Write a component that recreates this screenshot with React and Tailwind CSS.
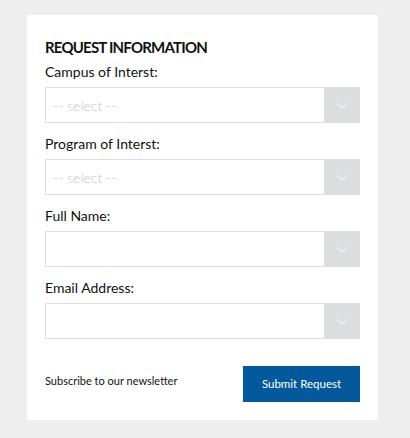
import React from "react";

const Chevron = () => (
  <svg width="12" height="7" viewBox="0 0 12 7" fill="none">
    <path d="M1 1 L6 6 L11 1" stroke="#ffffff" strokeWidth="1" />
  </svg>
);

function Field({ label, placeholder }) {
  return (
    <div className="flex flex-col">
      <div className="h-[36px] pt-[12px] text-[14px] leading-[17px] text-[#111]">{label}</div>
      <div className="flex h-[36px] border border-[#dddddd] bg-white">
        <div className="flex-1 flex items-center pl-[7px] text-[14px] font-light text-[#c4c4c4]">{placeholder}</div>
        <div className="w-[36px] -my-px -mr-px bg-[#dcdddf] flex items-center justify-center">
          <Chevron />
        </div>
      </div>
    </div>
  );
}

export default function App() {
  return (
    <div className="w-[410px] h-[438px] bg-[#eeeeee] pt-[15px] pl-[27px]" style={{ fontFamily: "Lato, 'Open Sans', sans-serif" }}>
      <div className="w-[351px] h-[405px] bg-white px-[18px] pt-[23px]">
        <div className="text-[15px] leading-[18px] font-bold text-[#111] tracking-[-0.8px]">REQUEST INFORMATION</div>
        <div className="-mt-[5px]">
          <Field label="Campus of Interst:" placeholder="-- select --" />
          <Field label="Program of Interst:" placeholder="-- select --" />
          <Field label="Full Name:" placeholder="" />
          <Field label="Email Address:" placeholder="" />
        </div>
        <div className="mt-[27px] flex items-center justify-between">
          <div className="text-[11px] text-[#111] -mt-[6px]">Subscribe to our newsletter</div>
          <div className="w-[117px] h-[36px] bg-[#03599c] text-white text-[11.5px] flex items-center justify-center">Submit Request</div>
        </div>
      </div>
    </div>
  );
}
